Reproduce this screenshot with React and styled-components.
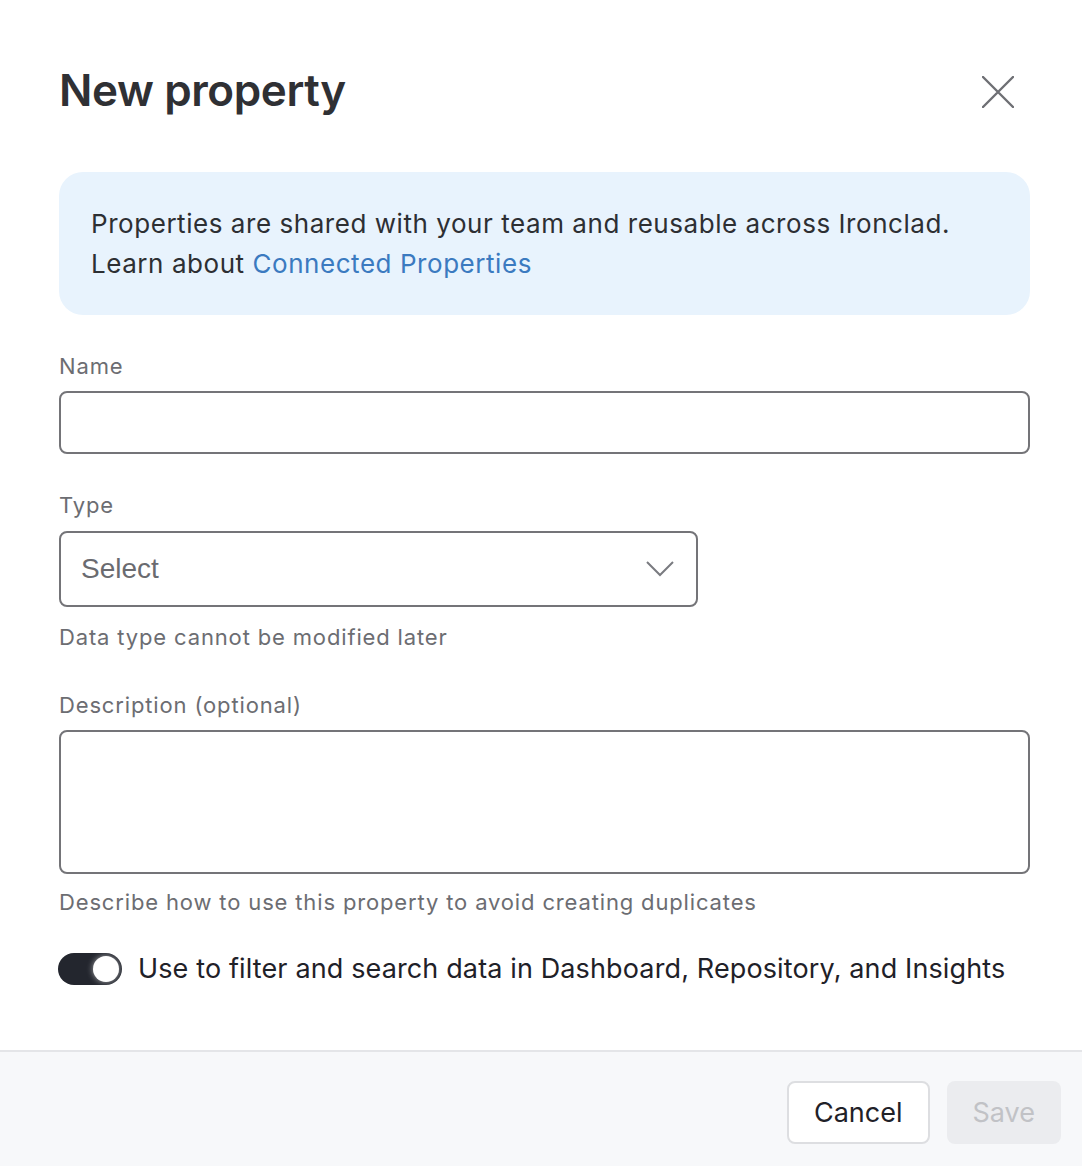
import React, { useState } from 'react';
import styled, { createGlobalStyle } from 'styled-components';

const GlobalStyle = createGlobalStyle`
  html, body {
    margin: 0;
    padding: 0;
    background: #ffffff;
    font-family: Inter, "Noto Sans", sans-serif;
  }
  * { box-sizing: border-box; }
`;

const Dialog = styled.div`
  width: 1082px;
  height: 1166px;
  display: flex;
  flex-direction: column;
  background: #fff;
`;

const Body = styled.div`
  flex: 1;
  padding: 58px 52px 0 59px;
`;

const Header = styled.div`
  display: flex;
  justify-content: space-between;
  align-items: center;
  margin-bottom: 50px;
`;

const Title = styled.h1`
  margin: 0;
  font-size: 44px;
  font-weight: 600;
  letter-spacing: -0.4px;
  color: #2f3034;
  line-height: 64px;
`;

const CloseButton = styled.button`
  border: none;
  background: none;
  padding: 0;
  width: 40px;
  height: 40px;
  display: flex;
  align-items: center;
  justify-content: center;
  cursor: pointer;
  margin: 4px 12px 0 0;
`;

const InfoBox = styled.div`
  background: #e8f3fd;
  border-radius: 24px;
  padding: 32px 32px 31px;
  font-size: 26px;
  letter-spacing: 0.55px;
  line-height: 40px;
  color: #2d2f33;
  margin-bottom: 36px;
`;

const Link = styled.a`
  color: #3b7ac0;
  text-decoration: none;
`;

const Field = styled.div`
  display: flex;
  flex-direction: column;
  margin-bottom: ${p => p.$gap || 38}px;
`;

const Label = styled.label`
  font-size: 22px;
  letter-spacing: 0.85px;
  line-height: 30px;
  color: #6c6d72;
  margin-bottom: ${p => p.$gap || 10}px;
`;

const Input = styled.input`
  height: 63px;
  border: 2px solid #747478;
  border-radius: 8px;
  font-size: 26px;
  padding: 0 20px;
  outline: none;
  font-family: inherit;
`;

const SelectBox = styled.div`
  width: 639px;
  height: 76px;
  border: 2px solid #747478;
  border-radius: 8px;
  display: flex;
  align-items: center;
  justify-content: space-between;
  padding: 0 22px 0 20px;
  font-family: "Liberation Sans", Arial, sans-serif;
  font-size: 28px;
  color: #6a6b70;
`;

const TextArea = styled.textarea`
  height: 144px;
  border: 2px solid #747478;
  border-radius: 8px;
  resize: none;
  outline: none;
  font-family: inherit;
  font-size: 26px;
  padding: 16px 20px;
`;

const Helper = styled.div`
  font-size: 22px;
  letter-spacing: 0.85px;
  line-height: 30px;
  color: #6c6d72;
  margin-top: ${p => p.$gap || 15}px;
`;

const ToggleRow = styled.div`
  display: flex;
  align-items: center;
  gap: 16px;
  margin-left: -1px;
`;

const Track = styled.button`
  position: relative;
  width: 64px;
  height: 32px;
  border-radius: 16px;
  border: none;
  padding: 0;
  background: ${p => (p.$on ? '#23262e' : '#c5c7cc')};
  cursor: pointer;
  flex-shrink: 0;
`;

const Knob = styled.span`
  position: absolute;
  top: 3px;
  left: ${p => (p.$on ? 35 : 3)}px;
  width: 26px;
  height: 26px;
  border-radius: 50%;
  background: #fff;
  box-shadow: 0 0 6px rgba(255, 255, 255, 0.6);
`;

const ToggleText = styled.span`
  font-size: 27px;
  letter-spacing: 0.13px;
  color: #1f2128;
`;

const Footer = styled.div`
  height: 116px;
  border-top: 2px solid #e4e5e8;
  background: #f7f8fa;
  display: flex;
  justify-content: flex-end;
  align-items: center;
  gap: 17px;
  padding: 6px 21px 0 0;
`;

const Button = styled.button`
  height: 63px;
  padding: 0 ${p => (p.$primary ? 26 : 25)}px;
  border-radius: 8px;
  font-family: inherit;
  font-size: 27px;
  border: ${p => (p.$primary ? 'none' : '2px solid #dddee1')};
  background: ${p => (p.$primary ? '#ebecef' : '#ffffff')};
  color: ${p => (p.$primary ? '#c1c2c6' : '#1f2128')};
  cursor: ${p => (p.$primary ? 'default' : 'pointer')};
`;

export default function App() {
  const [on, setOn] = useState(true);
  return (
    <Dialog>
      <GlobalStyle />
      <Body>
        <Header>
          <Title>New property</Title>
          <CloseButton aria-label="Close">
            <svg width="32" height="32" viewBox="0 0 32 32">
              <path d="M1 1 L31 31 M31 1 L1 31" stroke="#6e6f74" strokeWidth="2.4" strokeLinecap="round" />
            </svg>
          </CloseButton>
        </Header>

        <InfoBox>
          Properties are shared with your team and reusable across Ironclad.
          <br />
          Learn about <Link href="#">Connected Properties</Link>
        </InfoBox>

        <Field $gap={36}>
          <Label>Name</Label>
          <Input />
        </Field>

        <Field $gap={38}>
          <Label $gap={11}>Type</Label>
          <SelectBox>
            <span>Select</span>
            <svg width="28" height="16" viewBox="0 0 28 16">
              <path d="M1 1 L14 14 L27 1" fill="none" stroke="#7a7b80" strokeWidth="2" />
            </svg>
          </SelectBox>
          <Helper>Data type cannot be modified later</Helper>
        </Field>

        <Field $gap={35}>
          <Label>Description (optional)</Label>
          <TextArea />
          <Helper $gap={13}>Describe how to use this property to avoid creating duplicates</Helper>
        </Field>

        <ToggleRow>
          <Track $on={on} onClick={() => setOn(!on)}>
            <Knob $on={on} />
          </Track>
          <ToggleText>Use to filter and search data in Dashboard, Repository, and Insights</ToggleText>
        </ToggleRow>
      </Body>
      <Footer>
        <Button>Cancel</Button>
        <Button $primary disabled>Save</Button>
      </Footer>
    </Dialog>
  );
}
